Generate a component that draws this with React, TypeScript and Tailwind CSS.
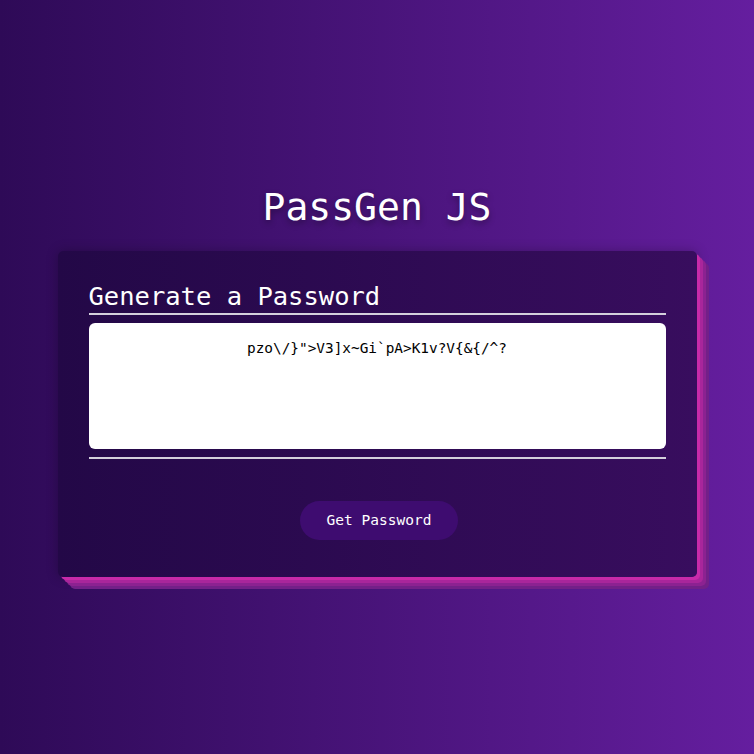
import React from "react";

const mono = "font-['DejaVu_Sans_Mono','Liberation_Mono',monospace]";

const password = "pzo\\/}\">V3]x~Gi`pA>K1v?V{&{/^?";

export default function App() {
  const [value, setValue] = React.useState(password);

  return (
    <div
      className={`w-full h-[754px] flex flex-col items-center bg-gradient-to-r from-[#2e0a57] to-[#651e9f] ${mono}`}
    >
      <h1 className="mt-[183px] text-[38px] leading-[48px] text-white [text-shadow:0_3px_6px_rgba(0,0,0,0.35)]">
        PassGen JS
      </h1>

      <div className="mt-[20px] w-[639px] rounded-[5px] bg-gradient-to-r from-[#230847] to-[#380d5e] px-[31px] pt-[29px] pb-[37px] shadow-[3px_3px_0_#c82aa9,6px_6px_0_#a9269b,9px_9px_0_#8c2291,12px_12px_0_#732088,0_0_12px_rgba(0,0,0,0.25)]">
        <div className="border-b-2 border-[#d4d0dc] pb-[1px]">
          <h2 className="text-[25.5px] leading-[32px] text-white">
            Generate a Password
          </h2>
        </div>

        <div className="mt-[8px] h-[126px] rounded-[6px] bg-white pt-[16px] text-center">
          <textarea
            readOnly
            value={value}
            onChange={(e) => setValue(e.target.value)}
            className={`w-full h-full resize-none bg-transparent text-center text-[14.4px] leading-[18px] text-black outline-none ${mono}`}
          />
        </div>

        <div className="mt-[8px] border-b-2 border-[#d4d0dc]" />

        <div className="mt-[42px] flex justify-center pl-[4px]">
          <button
            onClick={() => setValue(password)}
            className="w-[158px] h-[39px] rounded-full bg-[#3e0c70] text-[14.5px] text-white"
          >
            Get Password
          </button>
        </div>
      </div>
    </div>
  );
}
